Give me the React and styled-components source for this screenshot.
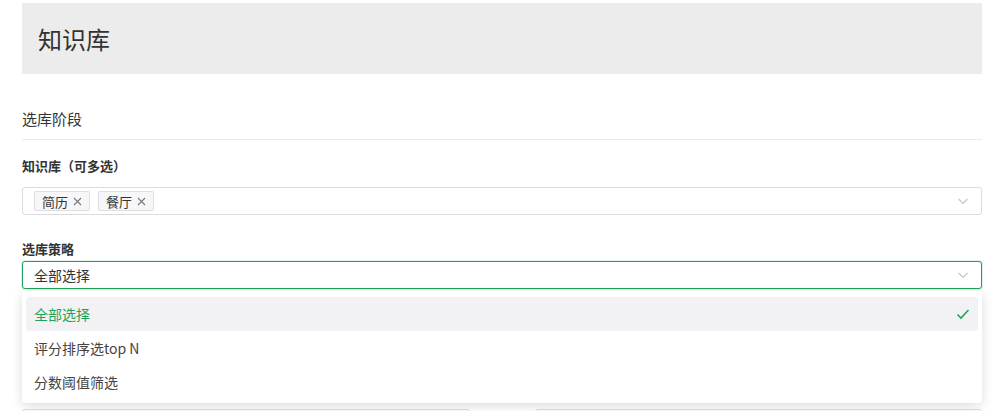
import React from "react";
import styled, { createGlobalStyle } from "styled-components";

const GlobalStyle = createGlobalStyle`
  html, body {
    margin: 0;
    padding: 0;
    background: #fff;
    font-family: "Noto Sans CJK SC", "Liberation Sans", sans-serif;
    color: #333;
    overflow: hidden;
  }
`;

const Page = styled.div`
  width: 960px;
  padding: 3px 0 0 22px;
`;

const Header = styled.header`
  display: flex;
  align-items: center;
  height: 71px;
  padding-left: 16px;
  background: #ececec;
`;

const Title = styled.h1`
  margin: 0;
  font-size: 24px;
  font-weight: 400;
  color: #333;
`;

const SectionTitle = styled.div`
  margin-top: 35px;
  padding-bottom: 10px;
  border-bottom: 1px solid #ebebeb;
  font-size: 15px;
  line-height: 20px;
`;

const Field = styled.div`
  position: relative;
  margin-top: ${p => p.$top}px;
`;

const Label = styled.div`
  font-size: 13px;
  font-weight: 700;
  line-height: 18px;
  margin-bottom: ${p => p.$gap}px;
  color: #333;
`;

const Box = styled.div`
  display: flex;
  align-items: center;
  gap: 8px;
  height: 28px;
  box-sizing: border-box;
  padding: 0 12px 0 11px;
  border: 1px solid ${p => (p.$active ? "#1fa35a" : "#dcdcdf")};
  border-radius: 3px;
  box-shadow: ${p => (p.$active ? "0 0 0 1px rgba(31,163,90,0.15)" : "none")};
  background: #fff;
  font-size: 14px;
`;

const Value = styled.span`
  flex: 1;
`;

const Tag = styled.span`
  display: inline-flex;
  align-items: center;
  gap: 5px;
  height: 20px;
  box-sizing: border-box;
  padding: 0 7px;
  background: #f7f7f9;
  border: 1px solid #dedee3;
  border-radius: 2px;
  font-size: 13px;
  color: #333;
`;

const Spacer = styled.span`
  flex: 1;
`;

const Menu = styled.ul`
  position: absolute;
  left: 0;
  right: 0;
  top: calc(100% + 2px);
  z-index: 10;
  margin: 0;
  padding: 6px 4px 4px;
  list-style: none;
  background: #fff;
  border-radius: 4px;
  box-shadow: 0 3px 12px rgba(0, 0, 0, 0.14);
`;

const Option = styled.li`
  display: flex;
  align-items: center;
  justify-content: space-between;
  height: 34px;
  padding: 0 8px;
  border-radius: 4px;
  font-size: 14px;
  color: ${p => (p.$selected ? "#1fa35a" : "#444")};
  background: ${p => (p.$selected ? "#f2f2f4" : "transparent")};
`;

const Row = styled.div`
  display: grid;
  grid-template-columns: 448px 447px;
  column-gap: 65px;
  margin-top: 120px;
`;

const Input = styled.div`
  height: 28px;
  border: 1px solid #dcdcdf;
  border-radius: 3px;
`;

const Close = () => (
  <svg width="9" height="9" viewBox="0 0 9 9">
    <path d="M1 1l7 7M8 1L1 8" fill="none" stroke="#777" strokeWidth="1.1" />
  </svg>
);

const Chevron = () => (
  <svg width="12" height="12" viewBox="0 0 12 12">
    <path d="M1.5 4l4.5 4.5L10.5 4" fill="none" stroke="#c4c4c8" strokeWidth="1.1" />
  </svg>
);

const Check = () => (
  <svg width="14" height="14" viewBox="0 0 14 14">
    <path d="M1.5 7.5l3.5 3.5 7.5-8" fill="none" stroke="#1fa35a" strokeWidth="1.6" />
  </svg>
);

const options = ["全部选择", "评分排序选top N", "分数阈值筛选"];

export default function App() {
  return (
    <>
      <GlobalStyle />
      <Page>
        <Header>
          <Title>知识库</Title>
        </Header>
        <SectionTitle>选库阶段</SectionTitle>

        <Field $top={17}>
          <Label $gap={12}>知识库（可多选）</Label>
          <Box>
            <Tag>简历<Close /></Tag>
            <Tag>餐厅<Close /></Tag>
            <Spacer />
            <Chevron />
          </Box>
        </Field>

        <Field $top={25}>
          <Label $gap={3}>选库策略</Label>
          <Box $active>
            <Value>全部选择</Value>
            <Chevron />
          </Box>
          <Menu>
            {options.map((o, i) => (
              <Option key={o} $selected={i === 0}>
                {o}
                {i === 0 && <Check />}
              </Option>
            ))}
          </Menu>
        </Field>

        <Row>
          <Input />
          <Input />
        </Row>
      </Page>
    </>
  );
}
